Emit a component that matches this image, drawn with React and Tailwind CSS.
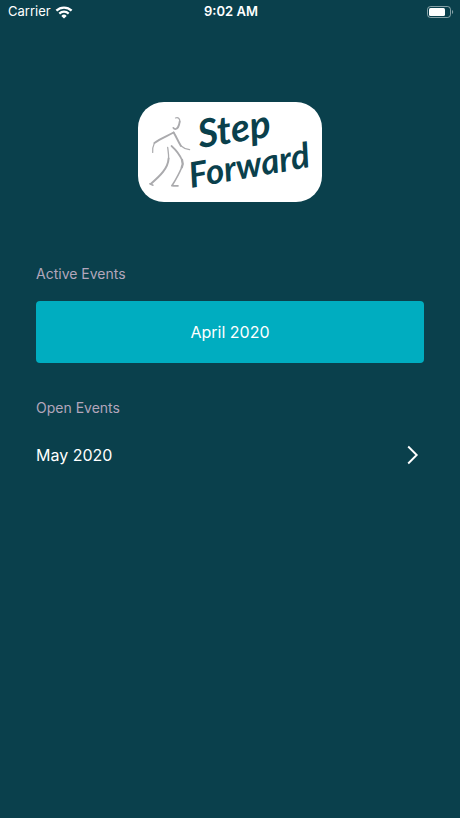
const activeEvents = ["April 2020"];
const openEvents = ["May 2020"];

function StatusBar() {
  return (
    <header className="grid grid-cols-3 items-center h-6 pl-2 pr-1.5 text-[13px]">
      <div className="flex items-center gap-1">
        <span>Carrier</span>
        <svg viewBox="0 0 18 13" className="w-[18px] h-[13px]" fill="none">
          <path d="M1.4 4.6a11 11 0 0 1 15.2 0" stroke="white" strokeWidth="2.3" />
          <path d="M4.3 7.6a6.8 6.8 0 0 1 9.4 0" stroke="white" strokeWidth="2.2" />
          <path d="M9 12.6 6.3 9.9a3.9 3.9 0 0 1 5.4 0Z" fill="white" />
        </svg>
      </div>
      <time className="text-center font-semibold">9:02 AM</time>
      <svg viewBox="0 0 28 13" className="w-7 h-[13px] justify-self-end">
        <rect x="1.5" y="0.5" width="23" height="11" rx="3" fill="none" stroke="white" strokeOpacity="0.5" />
        <rect x="3" y="2" width="16" height="8" rx="1.5" fill="white" />
        <path d="M26 4c1.6.6 1.6 3.4 0 4Z" fill="white" fillOpacity="0.5" />
      </svg>
    </header>
  );
}

function Logo() {
  return (
    <svg
      viewBox="0 0 184 100"
      role="img"
      aria-label="Step Forward"
      className="w-46 h-25 mx-auto rounded-[26px] bg-white overflow-visible"
    >
      {/* walking figure */}
      <g fill="none" stroke="#aaaaad" strokeLinecap="round" strokeLinejoin="round">
        <path d="M37.5 16c3-1 4.700 1 4.200 4.200" strokeWidth="1.200" />
        <path d="M41.700 19.500c-.5 4.500-2.500 7.500-4.300 7.600-1 0-1.600-.5-2-1.200" strokeWidth="1.900" />
        <path d="M14.700 50.500c-.4-3.500.3-6.500 1.700-9.500" strokeWidth="1.200" />
        <path d="M16.400 41c5.500-4.200 12.500-6.800 19.200-10.500" strokeWidth="1.800" />
        <path d="M35.600 30.500c2.600 3.800 4.200 8.500 7.200 13.200" strokeWidth="2" />
        <path d="M42.800 43.700c2.400 2.300 5.200 3.400 8.800 4" strokeWidth="1.200" />
        <path d="M29.700 45.500c.5 4 1.100 7.500.9 11" strokeWidth="1.300" />
        <path d="M30.600 56.500c-.6 10-8.600 17.500-17.600 25.300" strokeWidth="2" />
        <path d="M11.800 81.800 15 83.200" strokeWidth="1.500" />
        <path d="M33.500 44c4.500 4 8 8.500 10.500 14" strokeWidth="1.700" />
        <path d="M44 58c1 2.500.8 5-.2 7.200" strokeWidth="2.300" />
        <path d="M43.800 65.200c-2.600 6.300-5.800 12-9.400 17.800" strokeWidth="1.600" />
        <path d="M33.800 83.600c2 .4 4.200.3 6.200.3" strokeWidth="1.600" />
      </g>
      <g fill="#0a404c" fontFamily="Lato, sans-serif" fontWeight="700" fontStyle="italic">
        <text x="62" y="46" fontSize="39" transform="rotate(-9 62 46)">Step</text>
        <text x="53" y="86" fontSize="35" transform="rotate(-10 53 86)">Forward</text>
      </g>
    </svg>
  );
}

function Chevron() {
  return (
    <svg viewBox="0 0 12 20" className="w-3 h-5" fill="none" stroke="white" strokeWidth="1.900">
      <path d="M1.200 1.500 9.700 10l-8.500 8.500" />
    </svg>
  );
}

export default function App() {
  return (
    <div className="min-h-screen bg-[#0a404c] text-white font-['Inter',sans-serif]">
      <StatusBar />
      <main className="px-9 pt-[78px]">
        <Logo />

        <section className="mt-15">
          <h2 className="text-sm leading-6 text-[#b3a6bb]">Active Events</h2>
          {activeEvents.map((name) => (
            <button
              key={name}
              type="button"
              className="w-full mt-[15px] py-[19px] rounded-sm bg-[#00adc0] text-base"
            >
              {name}
            </button>
          ))}
        </section>

        <section className="mt-[33px]">
          <h2 className="text-sm leading-6 text-[#b3a6bb]">Open Events</h2>
          {openEvents.map((name) => (
            <button
              key={name}
              type="button"
              className="flex w-full items-center justify-between mt-[15px] py-2 pr-[5px] text-base"
            >
              {name}
              <Chevron />
            </button>
          ))}
        </section>
      </main>
    </div>
  );
}
